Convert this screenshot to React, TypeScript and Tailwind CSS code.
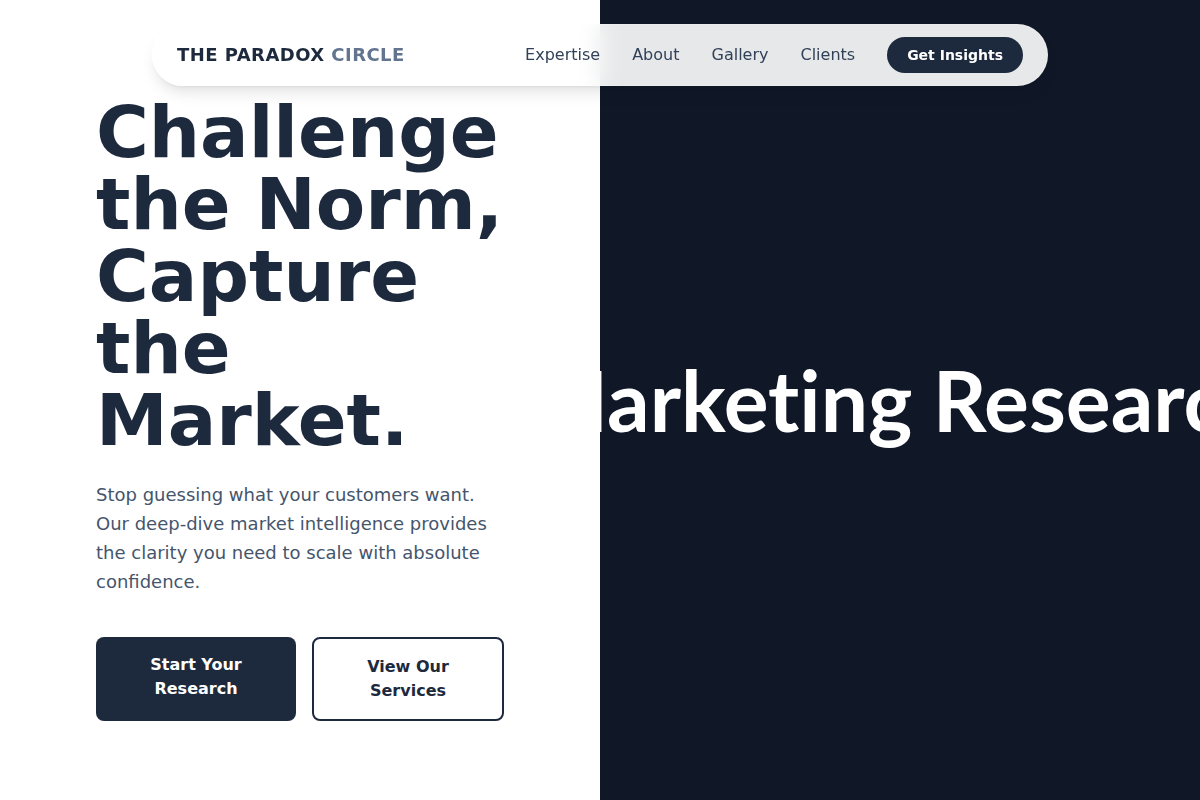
import React from 'react';

const navLinks = ['Expertise', 'About', 'Gallery', 'Clients'];

const Navbar = () => (
  <nav className="fixed top-6 left-1/2 -translate-x-1/2 z-20 w-full max-w-4xl">
    <div className="flex items-center justify-between rounded-full border border-white/20 bg-white/90 backdrop-blur-md shadow-lg pl-6 pr-6 py-3">
      <a href="#" className="text-lg font-bold tracking-wide text-slate-800">
        THE PARADOX <span className="text-slate-500">CIRCLE</span>
      </a>
      <div className="flex items-center gap-8">
        {navLinks.map((link) => (
          <a key={link} href="#" className="text-base text-slate-700">
            {link}
          </a>
        ))}
        <button className="rounded-full bg-slate-800 px-5 py-2 text-sm font-bold text-white">
          Get Insights
        </button>
      </div>
    </div>
  </nav>
);

export default function App() {
  return (
    <div className="relative h-screen w-full overflow-hidden font-['DejaVu_Sans',sans-serif]">
      <Navbar />
      <div className="grid h-full grid-cols-2">
        {/* left: hero copy */}
        <div className="flex flex-col justify-center bg-white px-24 pt-4">
          <h1 className="text-[72px] font-bold leading-none text-slate-800">
            Challenge the Norm, Capture the Market.
          </h1>
          <p className="mt-6 text-lg leading-relaxed text-slate-600">
            Stop guessing what your customers want. Our deep-dive market intelligence provides the
            clarity you need to scale with absolute confidence.
          </p>
          <div className="mt-10 flex gap-4">
            <a href="#" className="block w-[200px] rounded-lg bg-slate-800 px-8 py-4 text-center text-base font-bold leading-6 text-white">
              Start Your Research
            </a>
            <a href="#" className="block w-[192px] rounded-lg border-2 border-slate-800 bg-white px-8 py-4 text-center text-base font-bold leading-6 text-slate-800">
              View Our Services
            </a>
          </div>
        </div>

        {/* right: dark panel with oversized word mark */}
        <div className="flex items-center justify-center bg-gray-900">
          <span className="whitespace-nowrap font-['Lato',sans-serif] text-[84px] font-bold leading-none text-white [font-variant-ligatures:none]">
            Marketing Research
          </span>
        </div>
      </div>
    </div>
  );
}
